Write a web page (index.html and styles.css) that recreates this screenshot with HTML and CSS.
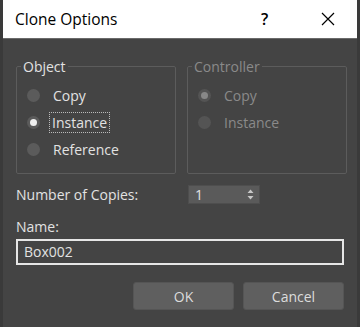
FILE: index.html
```html
<!DOCTYPE html>
<html lang="en">
<head>
  <meta charset="UTF-8">
  <title>Clone Options</title>
  <link rel="stylesheet" href="styles.css">
</head>
<body>
  <div class="dialog">
    <header class="titlebar">
      <span class="title">Clone Options</span>
      <span class="help">?</span>
      <svg class="close" width="14" height="14" viewBox="0 0 14 14">
        <path d="M1 1L13 13M13 1L1 13" stroke="#000" stroke-width="1.2"/>
      </svg>
    </header>

    <main class="content">
      <div class="groups">
        <fieldset class="group">
          <legend>Object</legend>
          <label class="radio"><span class="dot"></span>Copy</label>
          <label class="radio checked"><span class="dot"></span><span class="focus">Instance</span></label>
          <label class="radio"><span class="dot"></span>Reference</label>
        </fieldset>
        <fieldset class="group disabled">
          <legend>Controller</legend>
          <label class="radio checked"><span class="dot"></span>Copy</label>
          <label class="radio"><span class="dot"></span>Instance</label>
        </fieldset>
      </div>

      <div class="copies">
        <span>Number of Copies:</span>
        <div class="spinner">
          <span>1</span>
          <svg width="7" height="11" viewBox="0 0 7 11">
            <path d="M3.5 0.5L6.5 4H0.5Z M3.5 10.5L6.5 7H0.5Z" fill="#c8c8c8"/>
          </svg>
        </div>
      </div>

      <div class="name-label">Name:</div>
      <div class="name-box">Box002</div>

      <div class="buttons">
        <button class="btn">OK</button>
        <button class="btn">Cancel</button>
      </div>
    </main>
  </div>
</body>
</html>
```

FILE: styles.css
```css
html, body { margin: 0; height: 100%; }
body {
  background: #3a3a3a;
  font-family: "Open Sans", "Noto Sans", sans-serif;
  font-size: 14px;
  padding: 0 3px;
  box-sizing: border-box;
}
.dialog { height: 327px; display: flex; flex-direction: column; background: #444444; }

.titlebar {
  height: 38px;
  background: #ffffff;
  border-bottom: 1px solid #6a6a6a;
  display: flex;
  align-items: center;
  padding-left: 12px;
  color: #000;
}
.title { font-size: 15.5px; flex: 1; }
.help { font-size: 16px; font-weight: 600; width: 20px; margin-right: 40px; }
.close { margin-right: 22px; }

.content { padding: 18px 11px 0 13px; color: #e2e2e2; }

.groups { display: flex; gap: 11px; }
.group {
  margin: 0;
  flex: 0 0 160px;
  box-sizing: border-box;
  height: 117px;
  border: 1px solid #5c5c5c;
  border-radius: 2px;
  padding: 9px 0 0 10px;
  display: flex;
  flex-direction: column;
  gap: 7px;
}
.group legend { padding: 0 2px; margin-left: -6px; }
.group.disabled { color: #8a8a8a; }

.radio { display: flex; align-items: center; height: 20px; }
.dot {
  width: 13px; height: 13px; border-radius: 50%;
  background: #5b5b5b;
  margin-right: 13px;
  position: relative;
}
.checked .dot::after {
  content: ""; position: absolute; left: 3px; top: 3px;
  width: 7px; height: 7px; border-radius: 50%; background: #f0f0f0;
}
.disabled .dot { background: #545454; }
.disabled .checked .dot::after { background: #888; }
.focus { outline: 1px dotted #bbb; padding: 0 2px; margin-left: -3px; }

.copies { display: flex; align-items: center; margin-top: 10px; height: 20px; }
.copies > span { width: 172px; }
.spinner {
  width: 72px; height: 19px; box-sizing: border-box;
  background: #5a5a5a; border: 1px solid #4e4e4e;
  display: flex; align-items: center; justify-content: space-between;
  padding: 0 5px 0 6px;
}

.name-label { margin-top: 13px; height: 20px; }
.name-box {
  height: 26px; box-sizing: border-box;
  border: 2px solid #e6e6e6;
  background: #444;
  padding: 1px 6px;
  margin-top: 2px;
  margin-right: 2px;
}

.buttons { display: flex; justify-content: flex-end; gap: 9px; margin-top: 17px; margin-right: 2px; }
.btn {
  width: 101px; height: 28px;
  background: #5f5f5f; color: #dcdcdc;
  border: 1px solid #555; border-radius: 3px;
  font: inherit;
}
```
